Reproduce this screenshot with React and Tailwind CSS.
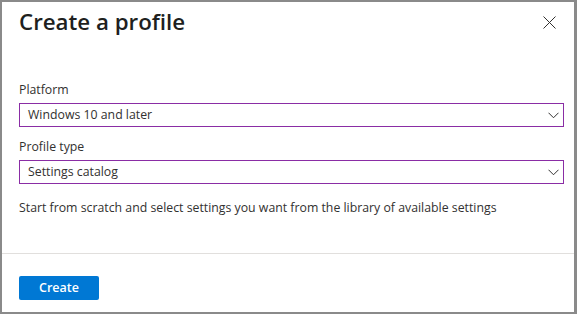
const font = { fontFamily: '"Open Sans", "Noto Sans", sans-serif' };

function Chevron() {
  return (
    <svg width="11" height="7" viewBox="0 0 11 7" fill="none">
      <path d="M0.5 0.75 L5.5 5.75 L10.5 0.75" stroke="#323130" strokeWidth="1" />
    </svg>
  );
}

function Select({ label, value }) {
  return (
    <div className="flex flex-col">
      <label className="text-[12.3px] leading-[18px] text-[#323130]">{label}</label>
      <div className="mt-[4px] flex h-6 items-center justify-between border border-[#8a2da5] pl-2 pr-[4px]">
        <span className="text-[12.3px] text-[#323130]">{value}</span>
        <Chevron />
      </div>
    </div>
  );
}

export default function App() {
  return (
    <div
      className="flex h-[314px] w-[577px] flex-col border-b-2 border-l-2 border-r-[3px] border-t-2 border-[#8a8a8a] bg-white"
      style={font}
    >
      <div className="flex items-start justify-between pl-[17px] pr-[18px] pt-[4px]">
        <h1 className="text-[22.3px] font-semibold leading-[32px] text-[#201f1e]">Create a profile</h1>
        <svg className="mt-[10px]" width="13" height="13" viewBox="0 0 13 13">
          <path d="M0.5 0.5 L12.5 12.5 M12.5 0.5 L0.5 12.5" stroke="#323130" strokeWidth="1" />
        </svg>
      </div>

      <div className="flex flex-col gap-[11px] pl-[17px] pr-[10px] pt-[43px]">
        <Select label="Platform" value="Windows 10 and later" />
        <Select label="Profile type" value="Settings catalog" />
      </div>
      <p className="pl-[17px] pt-[15px] text-[12.3px] text-[#323130]">
        Start from scratch and select settings you want from the library of available settings
      </p>

      <div className="mt-auto border-t border-[#e1dfdd] pb-[12px] pl-[17px] pt-[20px]">
        <button className="h-6 w-20 rounded-[2px] bg-[#0078d4] text-[12.5px] font-semibold text-white">
          Create
        </button>
      </div>
    </div>
  );
}
